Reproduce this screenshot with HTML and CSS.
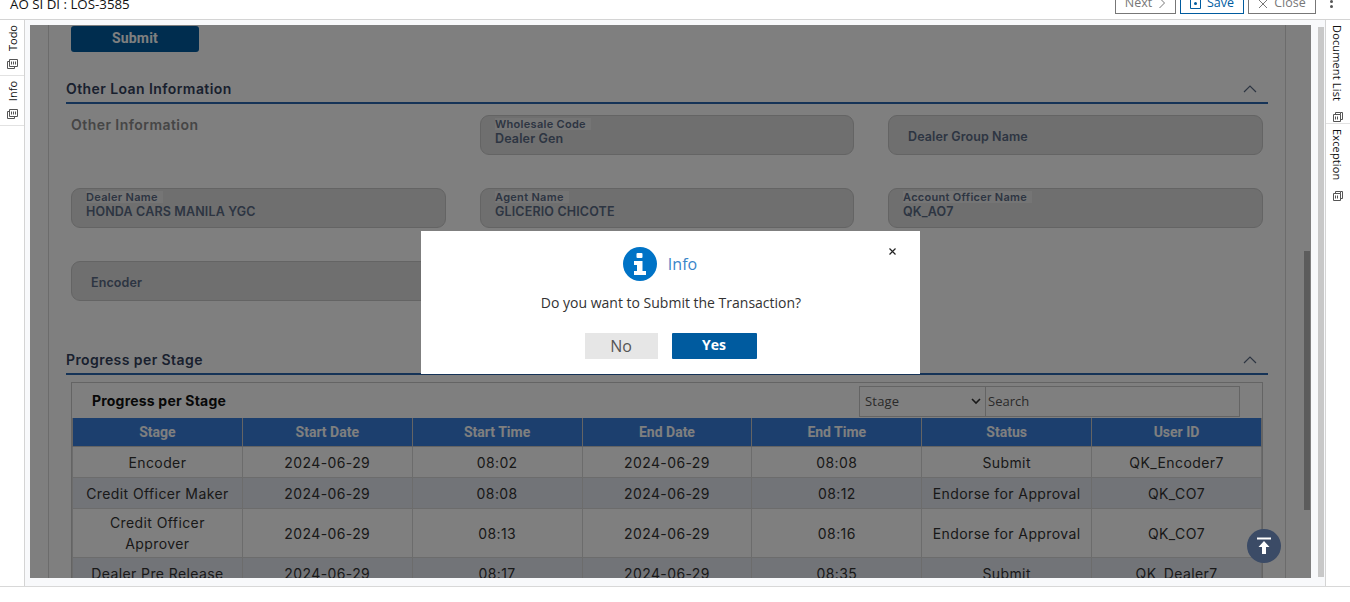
FILE: index.html
```html
<!DOCTYPE html>
<html lang="en">
<head>
    <meta charset="UTF-8">
    <title>AO SI DI : LOS-3585</title>
    <link rel="stylesheet" href="styles.css">
</head>
<body>

<header class="topbar">
    <div class="topbar-title">AO SI DI : LOS-3585</div>
    <div class="topbar-actions">
        <button class="tool-btn tool-next">Next
            <svg width="8" height="12" viewBox="0 0 8 12"><path d="M1.5 1l5 5-5 5" fill="none" stroke="#777" stroke-width="1"/></svg>
        </button>
        <button class="tool-btn tool-save">
            <svg width="11" height="12" viewBox="0 0 11 12"><path d="M.5 .5h10v11H.5z" fill="none" stroke="#005b9f"/><circle cx="5.5" cy="6.5" r="1.5" fill="#005b9f"/></svg>
            Save
        </button>
        <button class="tool-btn tool-close">
            <svg width="10" height="10" viewBox="0 0 10 10"><path d="M1 1l8 8M9 1l-8 8" stroke="#777" stroke-width="1"/></svg>
            Close
        </button>
        <div class="more-dots"><span></span><span></span><span></span></div>
    </div>
</header>

<div class="workspace">
    <aside class="rail rail-left">
        <div class="rail-tab rail-tab-todo">
            <span class="rail-label">Todo</span>
            <svg class="rail-icon" width="12" height="12" viewBox="0 0 12 12"><path d="M3.5 1.5h8v7h-8zM1.5 3.5h2M1.500 3.500v7h7v-2" fill="none" stroke="#555"/><path d="M5.500 3.500v3M7.500 3.500v3M9.500 3.500v3" stroke="#555"/></svg>
        </div>
        <div class="rail-tab rail-tab-info">
            <span class="rail-label">Info</span>
            <svg class="rail-icon" width="12" height="12" viewBox="0 0 12 12"><path d="M3.5 1.5h8v7h-8zM1.5 3.5h2M1.500 3.500v7h7v-2" fill="none" stroke="#555"/><path d="M5.500 3.500v3M7.500 3.500v3M9.500 3.500v3" stroke="#555"/></svg>
        </div>
    </aside>

    <main class="stage">
        <div class="stage-scroll">
            <div class="panel">
                <button class="submit-btn">Submit</button>

                <div class="section-head section-loan">
                    <span>Other Loan Information</span>
                    <svg width="14" height="8" viewBox="0 0 14 8"><path d="M1 7l6-6 6 6" fill="none" stroke="#5b6b85" stroke-width="1.2"/></svg>
                </div>

                <div class="field-grid">
                    <div class="group-title">Other Information</div>
                    <div class="field"><label>Wholesale Code</label><div class="field-value">Dealer Gen</div></div>
                    <div class="field field-empty"><div class="field-hint">Dealer Group Name</div></div>
                    <div class="field"><label>Dealer Name</label><div class="field-value">HONDA CARS MANILA YGC</div></div>
                    <div class="field"><label>Agent Name</label><div class="field-value">GLICERIO CHICOTE</div></div>
                    <div class="field"><label>Account Officer Name</label><div class="field-value">QK_AO7</div></div>
                    <div class="field field-empty"><div class="field-hint">Encoder</div></div>
                </div>

                <div class="section-head section-progress">
                    <span>Progress per Stage</span>
                    <svg width="14" height="8" viewBox="0 0 14 8"><path d="M1 7l6-6 6 6" fill="none" stroke="#5b6b85" stroke-width="1.2"/></svg>
                </div>

                <div class="table-box">
                    <div class="table-tools">
                        <div class="table-title">Progress per Stage</div>
                        <div class="table-search">
                            <div class="search-select">Stage
                                <svg width="10" height="7" viewBox="0 0 10 7"><path d="M1 1l4 4 4-4" fill="none" stroke="#333" stroke-width="1.6"/></svg>
                            </div>
                            <div class="search-input">Search</div>
                        </div>
                    </div>
                    <table class="stage-table">
                        <thead>
                            <tr><th>Stage</th><th>Start Date</th><th>Start Time</th><th>End Date</th><th>End Time</th><th>Status</th><th>User ID</th></tr>
                        </thead>
                        <tbody>
                            <tr><td>Encoder</td><td>2024-06-29</td><td>08:02</td><td>2024-06-29</td><td>08:08</td><td>Submit</td><td>QK_Encoder7</td></tr>
                            <tr><td>Credit Officer Maker</td><td>2024-06-29</td><td>08:08</td><td>2024-06-29</td><td>08:12</td><td>Endorse for Approval</td><td>QK_CO7</td></tr>
                            <tr><td>Credit Officer Approver</td><td>2024-06-29</td><td>08:13</td><td>2024-06-29</td><td>08:16</td><td>Endorse for Approval</td><td>QK_CO7</td></tr>
                            <tr><td>Dealer Pre Release</td><td>2024-06-29</td><td>08:17</td><td>2024-06-29</td><td>08:35</td><td>Submit</td><td>QK_Dealer7</td></tr>
                        </tbody>
                    </table>
                </div>
            </div>
            <div class="inner-scrollbar"><div class="inner-thumb"></div></div>
        </div>
        <div class="backdrop"></div>
        <button class="to-top">
            <svg width="16" height="18" viewBox="0 0 16 18"><path d="M1 1.500h14" stroke="#fff" stroke-width="2"/><path d="M8 4l5.500 6H10v7H6v-7H2.500z" fill="#fff"/></svg>
        </button>
    </main>

    <div class="page-scrollbar"><div class="page-thumb"></div></div>

    <aside class="rail rail-right">
        <div class="rail-tab rail-tab-docs">
            <span class="rail-label">Document List</span>
            <svg class="rail-icon" width="12" height="12" viewBox="0 0 12 12"><path d="M1.500 3.500h7v7h-7zM3.500 3.500v-2h5v2M8.500 1.500h2v7h-2" fill="none" stroke="#555"/><path d="M3.500 5.500v3M5.500 5.500v3" stroke="#555"/></svg>
        </div>
        <div class="rail-tab rail-tab-exc">
            <span class="rail-label">Exception</span>
            <svg class="rail-icon" width="12" height="12" viewBox="0 0 12 12"><path d="M1.500 3.500h7v7h-7zM3.500 3.500v-2h5v2M8.500 1.500h2v7h-2" fill="none" stroke="#555"/><path d="M3.500 5.500v3M5.500 5.500v3" stroke="#555"/></svg>
        </div>
    </aside>
</div>

<footer class="footer"></footer>

<div class="dialog">
    <button class="dialog-close">
        <svg width="7" height="7" viewBox="0 0 7 7"><path d="M.5 .5l6 6M6.500 .5l-6 6" stroke="#222" stroke-width="1.2"/></svg>
    </button>
    <div class="dialog-head">
        <svg width="34" height="34" viewBox="0 0 34 34"><circle cx="17" cy="17" r="17" fill="#0073c6"/><rect x="13.500" y="6" width="6" height="5" rx="1" fill="#fff"/><path d="M11 14h8.500v10H23v4H11v-4h3v-6h-3z" fill="#fff"/></svg>
        <span>Info</span>
    </div>
    <p class="dialog-text">Do you want to Submit the Transaction?</p>
    <div class="dialog-actions">
        <button class="btn-no">No</button>
        <button class="btn-yes">Yes</button>
    </div>
</div>

</body>
</html>
```

FILE: styles.css
```css
html, body {
    margin: 0;
    height: 100%;
}
body {
    width: 1350px;
    height: 602px;
    overflow: hidden;
    background: #fff;
    font-family: 'Open Sans', sans-serif;
    display: flex;
    flex-direction: column;
    position: relative;
}
.topbar {
    height: 19px;
    flex: none;
    border-bottom: 1px solid #d4d4d4;
    display: flex;
    justify-content: space-between;
    align-items: flex-end;
    overflow: hidden;
}
.topbar-title {
    margin: 0 0 6px 10px;
    font-size: 13.3px;
    line-height: 18px;
    color: #111;
}
.topbar-actions {
    display: flex;
    align-items: flex-end;
    gap: 4px;
    padding-bottom: 5px;
    height: 24px;
    margin-right: 8px;
}
.tool-btn {
    height: 24px;
    display: flex;
    align-items: flex-end;
    justify-content: center;
    gap: 6px;
    padding: 0 0 2px;
    box-sizing: border-box;
    background: #fff;
    border: 1px solid #777;
    color: #777;
    font-family: 'Open Sans', sans-serif;
    font-size: 12.5px;
    line-height: 17px;
}
.tool-btn svg { margin-bottom: 2px; }
.tool-next { width: 61px; }
.tool-save { width: 64px; border-color: #005b9f; color: #005b9f; }
.tool-close { width: 68px; }
.more-dots {
    width: 22px;
    height: 24px;
    padding-bottom: 6px;
    box-sizing: border-box;
    display: flex;
    flex-direction: column;
    align-items: center;
    justify-content: flex-end;
    gap: 2px;
}
.more-dots span {
    width: 3px;
    height: 3px;
    border-radius: 50%;
    background: #555;
}

.workspace {
    flex: none;
    height: 566px;
    display: flex;
}
.rail {
    flex: none;
    background: #fff;
}
.rail-left {
    width: 24px;
    border-right: 1px solid #d4d4d4;
}
.rail-right {
    width: 24px;
    border-left: 1px solid #d4d4d4;
}
.rail-tab {
    display: flex;
    flex-direction: column;
    align-items: center;
    border-bottom: 1px solid #e2e2e2;
    box-sizing: border-box;
    padding-top: 5px;
}
.rail-left .rail-tab {
    height: 50px;
    gap: 7px;
}
.rail-left .rail-tab-todo { height: 56px; }
.rail-left .rail-label {
    writing-mode: vertical-rl;
    transform: rotate(180deg);
    margin-left: 2px;
}
.rail-right .rail-label {
    writing-mode: vertical-rl;
    margin-right: 3px;
    letter-spacing: .15px;
}
.rail-tab-docs { height: 104px; gap: 10px; }
.rail-tab-exc { height: 83px; gap: 10px; border-bottom: none; }
.rail-label {
    font-size: 11px;
    line-height: 14px;
    color: #111;
    white-space: nowrap;
}
.rail-icon { flex: none; }

.stage {
    flex: none;
    width: 1293px;
    position: relative;
    background: #f8f9fb;
    padding: 5px 0 8px 5px;
    box-sizing: border-box;
}
.stage-scroll {
    height: 553px;
    width: 1281px;
    overflow: hidden;
    background: #fff;
    display: flex;
    position: relative;
}
.panel {
    margin-left: 18px;
    width: 1238px;
    border: solid #d8d8d8;
    border-width: 0 1px;
    padding: 1px 0 0 22px;
    box-sizing: border-box;
    flex: none;
}
.submit-btn {
    display: block;
    width: 128px;
    height: 26px;
    padding: 0 0 2px;
    background: #005b9f;
    color: #fff;
    border: none;
    border-radius: 3px;
    font-family: 'Roboto', sans-serif;
    font-weight: 700;
    font-size: 14px;
    letter-spacing: .2px;
}
.section-head {
    margin-left: -5px;
    width: 1202px;
    height: 25px;
    padding-bottom: 1px;
    box-sizing: content-box;
    border-bottom: 2px solid #2b66ae;
    display: flex;
    justify-content: space-between;
    align-items: center;
    font-family: 'Inter', sans-serif;
    font-weight: 600;
    font-size: 14px;
    letter-spacing: .42px;
    color: #33415c;
}
.section-head svg { margin-right: 11px; }
.section-loan { margin-top: 24px; }
.section-progress { margin-top: 46px; }
.field-grid {
    margin-top: 11px;
    width: 1192px;
    display: grid;
    grid-template-columns: 375px 374px 375px;
    grid-auto-rows: 40px;
    column-gap: 34px;
    row-gap: 33px;
}
.group-title {
    font-family: 'Inter', sans-serif;
    font-weight: 600;
    font-size: 14px;
    letter-spacing: .45px;
    line-height: 20px;
    color: #8c8c8c;
}
.field {
    background: #dedede;
    border: 1px solid #c8c8c8;
    border-radius: 9px;
    box-sizing: border-box;
    padding: 2px 14px;
    font-family: 'Inter', sans-serif;
    font-weight: 600;
    color: #5b6b85;
}
.field label {
    display: table;
    font-size: 11px;
    letter-spacing: .3px;
    line-height: 12px;
    padding-right: 5px;
    background: #ebebeb;
}
.field-value {
    margin-top: 1px;
    font-size: 12.5px;
    letter-spacing: .15px;
    line-height: 15px;
}
.field-hint {
    margin-top: 1px;
    margin-left: 5px;
    font-size: 12.5px;
    letter-spacing: .1px;
    line-height: 36px;
}

.table-box {
    margin-top: 7px;
    width: 1192px;
    border: 1px solid #c8c8c8;
    box-sizing: border-box;
    height: 300px;
}
.table-tools {
    height: 35px;
    display: flex;
    justify-content: space-between;
    align-items: center;
    padding: 0 22px 0 20px;
}
.table-title {
    font-family: 'Inter', sans-serif;
    font-weight: 700;
    font-size: 14px;
    letter-spacing: .2px;
    color: #111;
}
.table-search {
    display: flex;
    height: 31px;
    margin-top: 1px;
    color: #555;
    font-size: 13px;
}
.search-select {
    width: 127px;
    border: 1px solid #c8c8c8;
    box-sizing: border-box;
    padding: 0 4px 0 5px;
    display: flex;
    justify-content: space-between;
    align-items: center;
    letter-spacing: .2px;
}
.search-input {
    width: 254px;
    border: 1px solid #c8c8c8;
    border-left: none;
    box-sizing: border-box;
    padding-left: 2px;
    line-height: 29px;
}
.stage-table {
    border-collapse: collapse;
    table-layout: fixed;
    width: 1190px;
    font-family: 'Inter', sans-serif;
    font-size: 14px;
    letter-spacing: .4px;
    color: #333;
}
.stage-table th {
    background: #387edc;
    color: #fff;
    height: 28px;
    padding: 0;
    border: 1px solid #c8c8c8;
    border-top: none;
    font-family: 'Roboto', sans-serif;
    font-size: 14px;
    font-weight: 700;
    letter-spacing: 0;
}
.stage-table td {
    height: 31px;
    padding: 0 8px;
    line-height: 21px;
    border: 1px solid #d8d8d8;
    text-align: center;
    box-sizing: border-box;
}
.stage-table tbody tr:nth-child(even) td { background: #e4e8f0; }
.stage-table tbody tr:nth-child(3) td { height: 49px; }

.inner-scrollbar {
    width: 7px;
    margin-left: 18px;
    flex: none;
    position: relative;
}
.inner-thumb {
    position: absolute;
    top: 226px;
    left: 0;
    width: 6px;
    height: 259px;
    background: #b8b8b8;
}
.backdrop {
    position: absolute;
    left: 5px;
    top: 5px;
    width: 1281px;
    height: 553px;
    background: rgba(0, 0, 0, .5);
}
.to-top {
    position: absolute;
    left: 1222px;
    top: 509px;
    width: 34px;
    height: 34px;
    padding: 0;
    border: none;
    border-radius: 50%;
    background: #3b4b66;
    display: flex;
    align-items: center;
    justify-content: center;
}
.page-scrollbar {
    flex: none;
    width: 7px;
    background: #f8f9fb;
    padding-top: 7px;
    box-sizing: border-box;
}
.page-thumb {
    width: 6px;
    height: 550px;
    background: #c8c8c8;
}

.footer {
    flex: none;
    height: 16px;
    border-top: 1px solid #d8d8d8;
    background: #fff;
}

.dialog {
    position: absolute;
    left: 421px;
    top: 231px;
    width: 499px;
    height: 143px;
    background: #fff;
    text-align: center;
    box-sizing: border-box;
    padding-top: 16px;
}
.dialog-close {
    position: absolute;
    right: 24px;
    top: 17px;
    padding: 0;
    border: none;
    background: none;
    display: flex;
}
.dialog-head {
    height: 34px;
    display: flex;
    justify-content: center;
    align-items: center;
    gap: 11px;
    font-size: 16px;
    color: #3a85c9;
    padding-right: 21px;
}
.dialog-text {
    margin: 12px 0 0;
    padding-left: 1px;
    font-size: 14px;
    line-height: 20px;
    color: #333;
}
.dialog-actions {
    margin-top: 20px;
    display: flex;
    justify-content: center;
    gap: 14px;
}
.dialog-actions button {
    height: 26px;
    border: none;
    padding: 0;
    font-family: 'Open Sans', sans-serif;
}
.btn-no {
    width: 73px;
    background: #e6e6e6;
    color: #555;
    font-size: 16px;
}
.dialog-actions .btn-yes {
    width: 85px;
    padding: 0 0 3px 0;
    background: #005b9f;
    color: #fff;
    font-size: 14px;
    font-weight: 700;
    border-radius: 1px;
}
```
